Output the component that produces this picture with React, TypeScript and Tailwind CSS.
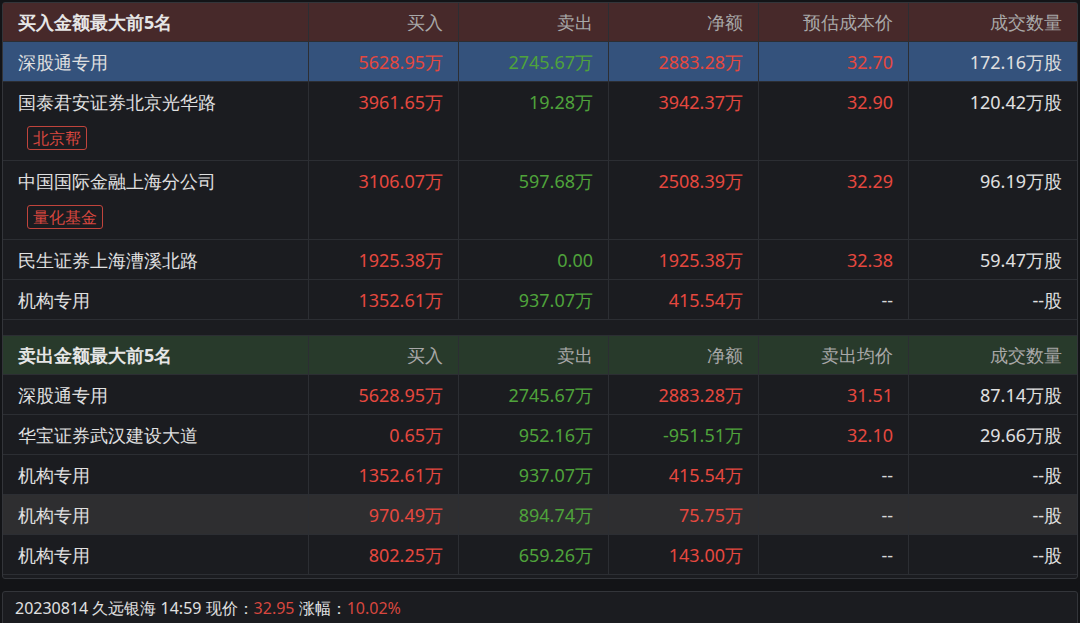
import React from "react";

type Row = { n: string; tag?: string; b: string; s: string; net: string; p: string; v: string; bg?: string };
const top: Row[] = [
  { n: "深股通专用", b: "5628.95万", s: "2745.67万", net: "2883.28万", p: "32.70", v: "172.16万股", bg: "bg-[#34527c]" },
  { n: "国泰君安证券北京光华路", tag: "北京帮", b: "3961.65万", s: "19.28万", net: "3942.37万", p: "32.90", v: "120.42万股" },
  { n: "中国国际金融上海分公司", tag: "量化基金", b: "3106.07万", s: "597.68万", net: "2508.39万", p: "32.29", v: "96.19万股" },
  { n: "民生证券上海漕溪北路", b: "1925.38万", s: "0.00", net: "1925.38万", p: "32.38", v: "59.47万股" },
  { n: "机构专用", b: "1352.61万", s: "937.07万", net: "415.54万", p: "--", v: "--股" },
];
const bot: Row[] = [
  { n: "深股通专用", b: "5628.95万", s: "2745.67万", net: "2883.28万", p: "31.51", v: "87.14万股" },
  { n: "华宝证券武汉建设大道", b: "0.65万", s: "952.16万", net: "-951.51万", p: "32.10", v: "29.66万股" },
  { n: "机构专用", b: "1352.61万", s: "937.07万", net: "415.54万", p: "--", v: "--股" },
  { n: "机构专用", b: "970.49万", s: "894.74万", net: "75.75万", p: "--", v: "--股", bg: "bg-[#2e2e30]" },
  { n: "机构专用", b: "802.25万", s: "659.26万", net: "143.00万", p: "--", v: "--股" },
];
const cols = "grid grid-cols-[306px_150px_150px_150px_150px_1fr]";
const cell = "border-r border-b border-[#2c2e33] px-[15px] flex items-center";

function Header({ title, last, bg }: { title: string; last: string; bg: string }) {
  return (
    <div className={`${cols} ${bg} h-[39px]`}>
      <div className={`${cell} font-bold text-[#e6e6e6]`}>{title}</div>
      {["买入", "卖出", "净额", last, "成交数量"].map((h, i) => (
        <div key={i} className={`${cell} justify-end text-[#a8a8a8] ${i === 4 ? "border-r-0" : ""}`}>{h}</div>
      ))}
    </div>
  );
}

function Body({ r }: { r: Row }) {
  const tall = !!r.tag;
  const h = tall ? "h-[79px] items-start pt-[11px]" : "h-[40px]";
  return (
    <div className={`${cols} ${r.bg ?? ""}`}>
      <div className={`${cell} ${h} flex-col !items-start ${tall ? "" : "justify-center"}`}>
        <span className="text-[#e0e0e0]">{r.n}</span>
        {r.tag && (
          <span className="mt-[15px] ml-[9px] border border-[#c0443c] rounded-[3px] px-[5px] text-[16px] leading-[22px] text-[#d8473f]">{r.tag}</span>
        )}
      </div>
      <div className={`${cell} ${h} justify-end text-[#e5483f]`}>{r.b}</div>
      <div className={`${cell} ${h} justify-end text-[#4fa33b]`}>{r.s}</div>
      <div className={`${cell} ${h} justify-end ${r.net.startsWith("-") ? "text-[#4fa33b]" : "text-[#e5483f]"}`}>{r.net}</div>
      <div className={`${cell} ${h} justify-end ${r.p === "--" ? "text-[#d8d8d8]" : "text-[#e5483f]"}`}>{r.p}</div>
      <div className={`${cell} ${h} justify-end border-r-0 text-[#e0e0e0]`}>{r.v}</div>
    </div>
  );
}

export default function App() {
  return (
    <div className="w-[1080px] h-[623px] bg-[#131417] overflow-hidden text-[18px] font-['Noto_Sans_CJK_SC',sans-serif] leading-none">
      <div className="mx-[2px] mt-[2px] border border-[#33353a] rounded-[3px] bg-[#1b1c20] h-[577px]">
        <Header title="买入金额最大前5名" last="预估成本价" bg="bg-[#47292a]" />
        {top.map((r, i) => <Body key={i} r={r} />)}
        <div className="h-[16px] border-b border-[#2c2e33]" />
        <Header title="卖出金额最大前5名" last="卖出均价" bg="bg-[#283a2b]" />
        {bot.map((r, i) => <Body key={i} r={r} />)}
      </div>
      <div className="mx-[2px] mt-[12px] border border-[#33353a] rounded-[3px] bg-[#1b1c20] h-[40px] px-[12px] pt-[8px] text-[16px] text-[#e0e0e0]">
        20230814 久远银海 14:59 现价：<span className="text-[#d8473f]">32.95</span> 涨幅：<span className="text-[#d8473f]">10.02%</span>
      </div>
    </div>
  );
}
